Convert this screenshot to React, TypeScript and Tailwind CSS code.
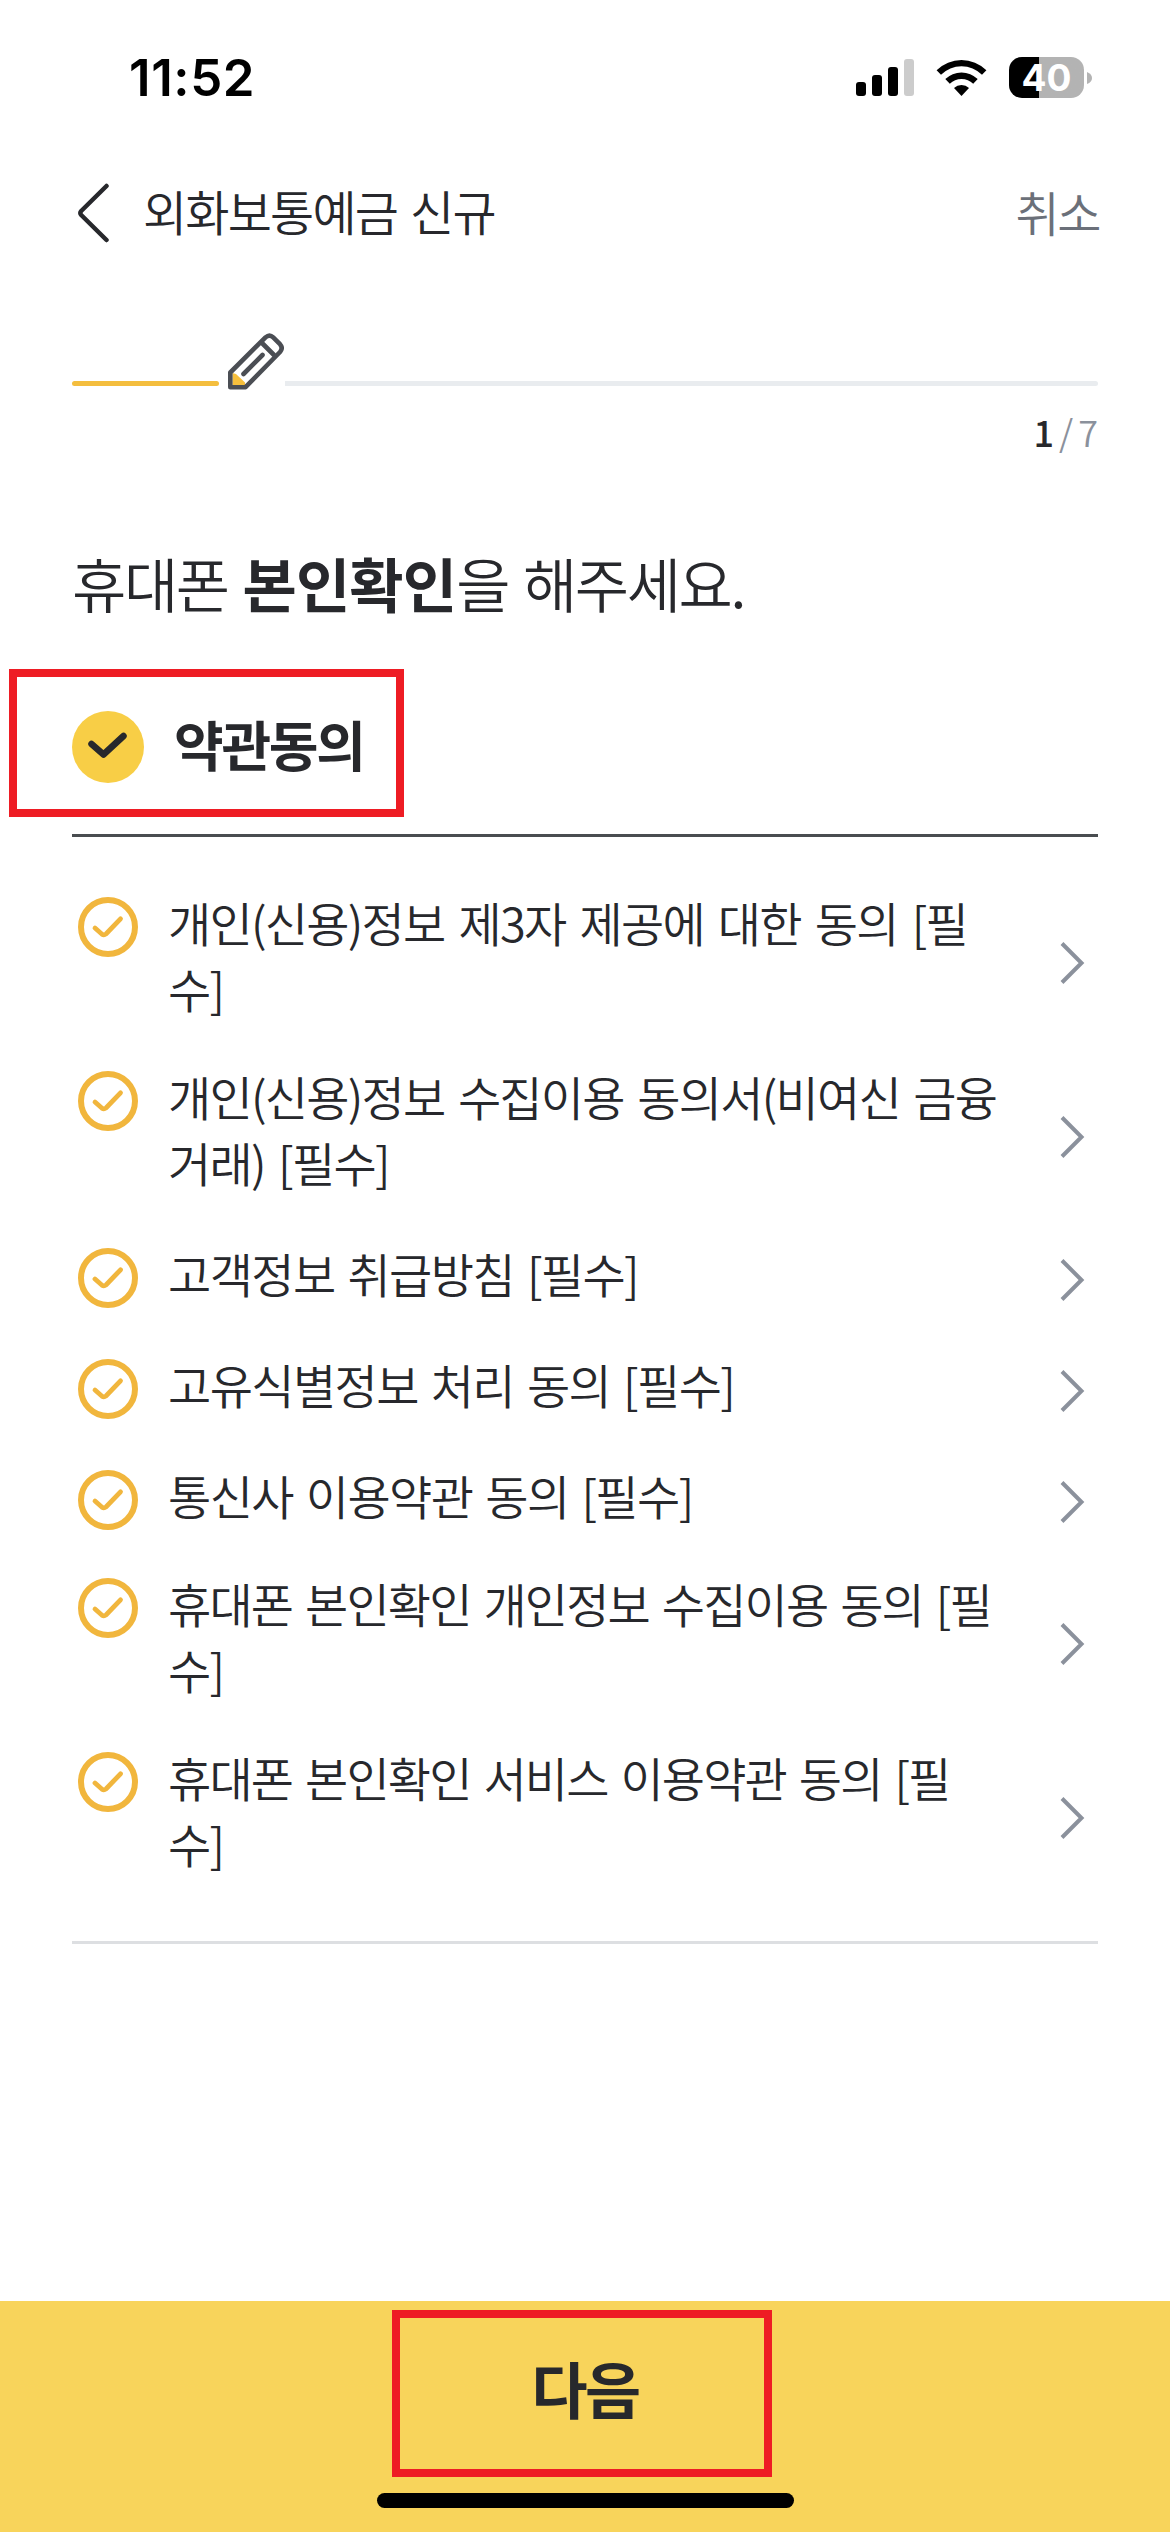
import React from 'react'

type Term = {
    lines: string[]
    spacing: string
}

const terms: Term[] = [
    { lines: ['개인(신용)정보 제3자 제공에 대한 동의 [필', '수]'], spacing: 'tracking-[-1.75px] [word-spacing:5.2px]' },
    { lines: ['개인(신용)정보 수집이용 동의서(비여신 금융', '거래) [필수]'], spacing: 'tracking-[-1.75px] [word-spacing:4.6px]' },
    { lines: ['고객정보 취급방침 [필수]'], spacing: 'tracking-[-1.6px] [word-spacing:4px]' },
    { lines: ['고유식별정보 처리 동의 [필수]'], spacing: 'tracking-[-1.6px] [word-spacing:4px]' },
    { lines: ['통신사 이용약관 동의 [필수]'], spacing: 'tracking-[-1.6px] [word-spacing:4px]' },
    { lines: ['휴대폰 본인확인 개인정보 수집이용 동의 [필', '수]'], spacing: 'tracking-[-1.85px] [word-spacing:4.2px]' },
    { lines: ['휴대폰 본인확인 서비스 이용약관 동의 [필', '수]'], spacing: 'tracking-[-1.85px] [word-spacing:4.2px]' },
]

function StatusBar() {
    return (
        <div className="flex h-[156px] items-start justify-between pt-[57px] pr-[78px] pl-[129px]">
            <span className="font-[Inter] text-[51px] leading-[42px] font-semibold tracking-[0.6px] text-black">11:52</span>
            <div className="flex h-[41px] items-center">
                <svg className="h-[37px] w-[58px]" viewBox="0 0 58 37">
                    <rect x="0" y="23" width="10" height="14" rx="3" />
                    <rect x="16" y="16" width="10" height="21" rx="3" />
                    <rect x="32" y="8" width="10" height="29" rx="3" />
                    <rect x="48" y="0" width="10" height="37" rx="3" fill="#cccccc" />
                </svg>
                <svg className="ml-[22px] h-[37px] w-[51px]" viewBox="0 0 51 37">
                    <path d="M0.6 11.2 A35.5 35.5 0 0 1 50.4 11.2 L46 15.8 A29 29 0 0 0 5 15.8 Z" />
                    <path d="M9.3 20.1 A23 23 0 0 1 41.7 20.1 L37.2 24.7 A16.8 16.8 0 0 0 13.8 24.7 Z" />
                    <path d="M18 29.1 A10.7 10.7 0 0 1 33 29.1 L25.5 37 Z" />
                </svg>
                <div className="ml-[22px] flex h-[41px] w-[75px] items-center justify-center rounded-[13px] bg-linear-to-r from-black from-40% to-[#b3b3b3] to-40%">
                    <span className="font-[Inter] text-[37px] leading-[41px] font-bold text-white">40</span>
                </div>
                <svg className="ml-[3px] h-[12px] w-[5px]" viewBox="0 0 5 12">
                    <path d="M0 0 Q5 2 5 6 Q5 10 0 12 Z" fill="#b3b3b3" />
                </svg>
            </div>
        </div>
    )
}

function Header() {
    return (
        <header className="flex h-[114px] items-center pr-[71px] pl-[76px]">
            <svg className="h-[60px] w-[34px]" viewBox="0 0 34 60" fill="none" stroke="#27282c" strokeWidth="4.5" strokeLinecap="round" strokeLinejoin="round">
                <path d="M30.5 3 L5.2 28 Q3.5 30 5.2 32 L30.5 57" />
            </svg>
            <h1 className="ml-[33px] flex-1 pb-[7px] text-[48px] font-[350] tracking-[-1.8px] [word-spacing:4px]">외화보통예금 신규</h1>
            <button className="pb-[5px] text-[48px] font-[350] tracking-[-2.4px] text-[#6b7079]">취소</button>
        </header>
    )
}

function Progress() {
    return (
        <section className="px-[72px]">
            <div className="flex h-[126px] items-end pb-[6px]">
                <div className="mb-[4px] h-[5px] w-[147px] rounded-full bg-[#f4be3e]" />
                <svg className="ml-[9px] h-[57px] w-[56px]" viewBox="0 0 56 57" fill="none" stroke="#4b4e54" strokeWidth="4.6" strokeLinejoin="round" strokeLinecap="round">
                    <path d="M4.5 40 L8 41 L17 49.5 L17 53 L4.5 53 Z" fill="#f6bf3c" stroke="none" />
                    <path d="M2.3 39.5 L37.5 4.4 Q41.5 0.8 45.2 4.4 L52 11.2 Q55.4 15 52 19 L17.5 54.2 L2.3 54.2 Z" />
                    <path d="M34.5 10.5 L46 22" />
                    <path d="M15.5 41 L34.5 22" />
                </svg>
                <div className="mb-[4px] ml-px h-[5px] flex-1 rounded-r-full bg-[#e9ecef]" />
            </div>
            <p className="flex items-center justify-end gap-[5px] pt-[14px] pb-[4px] text-[36px] leading-[42px] text-[#8b919c]">
                <b className="font-medium text-[#27282c]">1</b>
                <span className="font-[350]">/</span>
                <span className="font-[350]">7</span>
            </p>
        </section>
    )
}

function TermRow({ lines, spacing }: Term) {
    return (
        <li className={lines.length > 1 ? 'flex h-[174px] items-start pt-[21px]' : 'flex h-[111px] items-start pt-[24px]'}>
            <svg className="h-[60px] w-[60px]" viewBox="0 0 60 60" fill="none" stroke="#f1b63d">
                <circle cx="30" cy="30" r="27" strokeWidth="6" />
                <path d="M17 31 L24 37.2 Q26 38.6 28 37 L42.5 21.8" strokeWidth="4.8" strokeLinecap="round" />
            </svg>
            <div className={`-mt-[8px] ml-[30px] flex-1 text-[47px] leading-[66px] font-[350] whitespace-pre ${spacing}`}>
                {lines.map((line) => (
                    <p key={line}>{line}</p>
                ))}
            </div>
            <svg className={lines.length > 1 ? 'mt-[45px] h-[42px] w-[25px]' : 'mt-[11px] h-[42px] w-[25px]'} viewBox="0 0 25 42" fill="none" stroke="#8b919c" strokeWidth="4">
                <path d="M2 1.5 L21.5 21 L2 40.5" />
            </svg>
        </li>
    )
}

export default function App() {
    return (
        <main className="relative flex h-[2532px] w-[1170px] flex-col overflow-hidden bg-white font-['Noto_Sans_CJK_KR',sans-serif] text-[#27282c]">
            <StatusBar />
            <Header />
            <Progress />

            <section className="flex flex-1 flex-col px-[72px] pt-[83px]">
                <h2 className="text-[59px] leading-[88px] font-[350] tracking-[-2.4px] [word-spacing:4px]">
                    휴대폰 <b className="font-bold tracking-[-0.8px]">본인확인</b>을 해주세요.
                </h2>
                <div className="mt-[84px] flex h-[72px] items-center">
                    <svg className="h-[72px] w-[72px]" viewBox="0 0 72 72" fill="none">
                        <circle cx="36" cy="36" r="36" fill="#f8ce46" />
                        <path d="M19.5 33 L31.5 43.5 L51.5 25" stroke="#27282c" strokeWidth="6.5" strokeLinecap="round" strokeLinejoin="round" />
                    </svg>
                    <h3 className="ml-[30px] pb-[7px] text-[54px] leading-[72px] font-bold tracking-[-2.3px]">약관동의</h3>
                </div>
                <ul className="mt-[51px] border-t-[3px] border-b-[3px] border-t-[#494d50] border-b-[#dddfe2] pt-[39px] pr-[13px] pb-[36px] pl-[6px]">
                    {terms.map((term) => (
                        <TermRow key={term.lines.join('')} {...term} />
                    ))}
                </ul>
            </section>

            <footer className="flex h-[231px] flex-col items-center bg-[#f8d45b]">
                <button className="h-[192px] pb-[19px] text-[61px] font-bold tracking-[-2.5px]">다음</button>
                <div className="h-[15px] w-[417px] rounded-full bg-black" />
            </footer>

            {/* highlight frames */}
            <div className="absolute top-[669px] left-[9px] h-[148px] w-[395px] border-8 border-[#ee1c24]" />
            <div className="absolute top-[2310px] left-[392px] h-[167px] w-[380px] border-8 border-[#ee1c24]" />
        </main>
    )
}
